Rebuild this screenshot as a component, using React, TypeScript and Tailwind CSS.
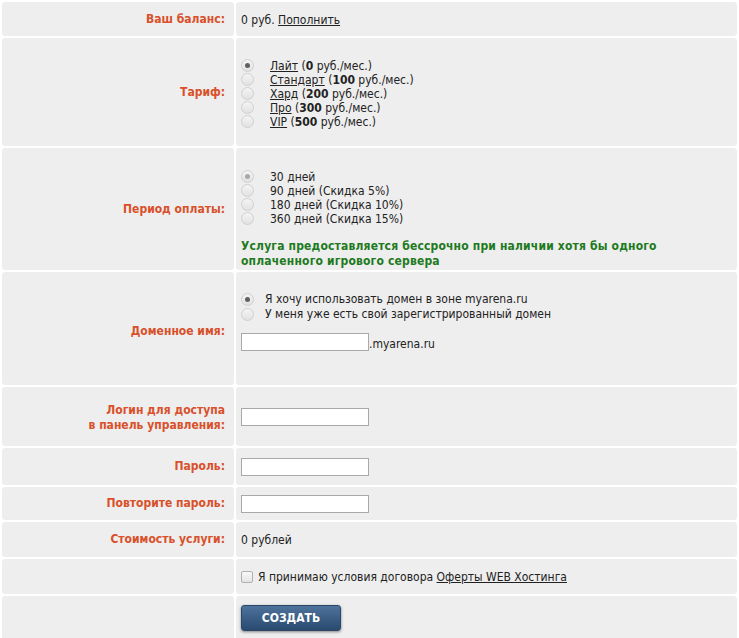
import React from "react";

const font = { fontFamily: '"DejaVu Sans Condensed", "DejaVu Sans", Tahoma, sans-serif' };

interface RowProps {
  label?: React.ReactNode;
  height: string;
  children?: React.ReactNode;
}

const Row: React.FC<RowProps> = ({ label, height, children }) => (
  <>
    <div
      className={`bg-[#eeeeee] rounded-[3px] flex items-center justify-end pr-[9px] text-right font-bold text-[#d9502a] leading-[15px] ${height}`}
    >
      {label}
    </div>
    <div className={`bg-[#eeeeee] rounded-[3px] flex items-center pl-[5px] ${height}`}>
      {children}
    </div>
  </>
);

const Radio: React.FC<{ checked?: boolean; light?: boolean }> = ({ checked, light }) => (
  <span className="w-[13px] h-[13px] rounded-full border border-[#d0d0d0] bg-gradient-to-b from-[#f4f4f4] to-[#e2e2e2] flex items-center justify-center shrink-0">
    {checked && (
      <span className={`w-[5px] h-[5px] rounded-full ${light ? "bg-[#a8a8a8]" : "bg-[#606060]"}`} />
    )}
  </span>
);

const Field = () => (
  <input
    type="text"
    className="w-[128px] h-[18px] border border-[#a9a9a9] bg-white outline-none"
  />
);

const tariffs = [
  { name: "Лайт", price: "0" },
  { name: "Стандарт", price: "100" },
  { name: "Хард", price: "200" },
  { name: "Про", price: "300" },
  { name: "VIP", price: "500" },
];

const periods = ["30 дней", "90 дней (Скидка 5%)", "180 дней (Скидка 10%)", "360 дней (Скидка 15%)"];

export default function App() {
  return (
    <div className="bg-white min-h-screen text-[12px] text-[#222]" style={font}>
      <div className="grid grid-cols-[232px_1fr] gap-[2px] px-[2px] pt-[2px]">
        <Row label="Ваш баланс:" height="h-[34px]">
          <span className="pt-[2px]">
            0 руб. <a className="underline text-[#222]">Пополнить</a>
          </span>
        </Row>

        <Row label="Тариф:" height="h-[108px]">
          <div className="flex flex-col pt-[3px]">
            {tariffs.map((t, i) => (
              <div key={t.name} className="flex items-center h-[14px]">
                <Radio checked={i === 0} />
                <span className="ml-[16px] leading-[14px]">
                  <a className="underline">{t.name}</a> (<b>{t.price}</b> руб./мес.)
                </span>
              </div>
            ))}
          </div>
        </Row>

        <Row label="Период оплаты:" height="h-[122px]">
          <div className="flex flex-col pt-[20px]">
            <div className="flex flex-col">
              {periods.map((p, i) => (
                <div key={p} className="flex items-center h-[14px]">
                  <Radio checked={i === 0} light />
                  <span className="ml-[16px] leading-[14px]">{p}</span>
                </div>
              ))}
            </div>
            <div className="mt-[13px] font-bold text-[#1e7a1e] leading-[15px] tracking-[0.17px]">
              Услуга предоставляется бессрочно при наличии хотя бы одного
              <br />
              оплаченного игрового сервера
            </div>
          </div>
        </Row>

        <Row label={<span className="pt-[5px]">Доменное имя:</span>} height="h-[113px]">
          <div className="flex flex-col pb-[14px]">
            <div className="flex flex-col">
              <div className="flex items-center h-[15px]">
                <Radio checked />
                <span className="ml-[11px] leading-[15px]">Я хочу использовать домен в зоне myarena.ru</span>
              </div>
              <div className="flex items-center h-[15px]">
                <Radio />
                <span className="ml-[11px] leading-[15px]">У меня уже есть свой зарегистрированный домен</span>
              </div>
            </div>
            <div className="flex items-end mt-[11px]">
              <Field />
              <span className="leading-[14px]">.myarena.ru</span>
            </div>
          </div>
        </Row>

        <Row
          label={
            <span className="pt-[3px]">
              Логин для доступа
              <br />в панель управления:
            </span>
          }
          height="h-[59px]"
        >
          <Field />
        </Row>

        <Row label="Пароль:" height="h-[37px]">
          <Field />
        </Row>

        <Row label="Повторите пароль:" height="h-[33px]">
          <Field />
        </Row>

        <Row label="Стоимость услуги:" height="h-[35px]">
          <span>0 рублей</span>
        </Row>

        <Row height="h-[35px]">
          <label className="flex items-center">
            <span className="w-[12px] h-[12px] rounded-[2px] border border-[#b0b0b0] bg-gradient-to-b from-[#f8f8f8] to-[#e4e4e4]" />
            <span className="ml-[5px]">
              Я принимаю условия договора <a className="underline">Оферты WEB Хостинга</a>
            </span>
          </label>
        </Row>

        <Row height="h-[44px]">
          <button className="w-[100px] h-[26px] rounded-[3px] bg-gradient-to-b from-[#4d739c] to-[#2a4a70] text-white font-bold text-[12px] shadow-[0_1px_3px_rgba(0,0,0,0.45)] border border-[#2a4668]">
            СОЗДАТЬ
          </button>
        </Row>
      </div>
    </div>
  );
}
